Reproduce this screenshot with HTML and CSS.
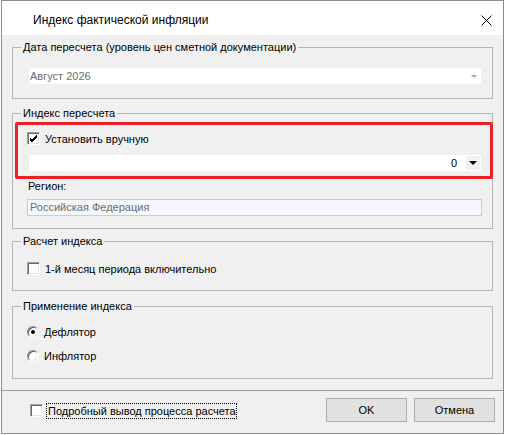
FILE: index.html
```html
<!DOCTYPE html>
<html lang="ru">
<head>
  <meta charset="UTF-8">
  <title>Индекс фактической инфляции</title>
  <link rel="stylesheet" href="styles.css">
</head>
<body>
  <div class="window">

    <!-- Title bar -->
    <div class="titlebar">
      <span class="title">Индекс фактической инфляции</span>
      <span class="close">
        <svg width="11" height="11" viewBox="0 0 11 11"><path d="M0.5 0.5 L10.5 10.5 M10.5 0.5 L0.5 10.5" stroke="#000" stroke-width="1" fill="none"/></svg>
      </span>
    </div>

    <div class="content">
      <fieldset class="group group-date">
        <legend>Дата пересчета (уровень цен сметной документации)</legend>
        <div class="group-body">
          <div class="combo disabled">
            <span class="combo-value">Август 2026</span>
            <span class="combo-btn"><i class="arrow"></i></span>
          </div>
        </div>
      </fieldset>

      <fieldset class="group group-index">
        <legend>Индекс пересчета</legend>
        <div class="group-body">
          <div class="manual">
            <label class="check-row">
              <span class="checkbox checked">
                <svg width="9" height="9" viewBox="0 0 9 9"><path d="M1 4 L3 6 L8 1 M1 5 L3 7 L8 2 M1 6 L3 8 L8 3" stroke="#000" stroke-width="1" fill="none"/></svg>
              </span>
              <span>Установить вручную</span>
            </label>
            <div class="combo value-combo">
              <span class="combo-value">0</span>
              <span class="combo-btn"><i class="arrow"></i></span>
            </div>
          </div>
          <div class="field-label">Регион:</div>
          <div class="textbox readonly">Российская Федерация</div>
        </div>
      </fieldset>

      <fieldset class="group group-calc">
        <legend>Расчет индекса</legend>
        <div class="group-body">
          <label class="check-row">
            <span class="checkbox"></span>
            <span>1-й месяц периода включительно</span>
          </label>
        </div>
      </fieldset>

      <fieldset class="group group-apply">
        <legend>Применение индекса</legend>
        <div class="group-body">
          <label class="radio-row">
            <span class="radio selected"></span>
            <span>Дефлятор</span>
          </label>
          <label class="radio-row">
            <span class="radio"></span>
            <span>Инфлятор</span>
          </label>
        </div>
      </fieldset>
    </div>

    <!-- Footer -->
    <div class="footer">
      <label class="check-row verbose">
        <span class="checkbox"></span>
        <span class="focused">Подробный вывод процесса расчета</span>
      </label>
      <div class="buttons">
        <button class="btn">OK</button>
        <button class="btn">Отмена</button>
      </div>
    </div>

  </div>
</body>
</html>
```

FILE: styles.css
```css
body {
  margin: 0;
  background: #fff;
  font-family: 'Liberation Sans', Arial, sans-serif;
  font-size: 11px;
  color: #000;
}

.window {
  box-sizing: border-box;
  width: 503px;
  height: 434px;
  margin-left: 1px;
  border: 1px solid #8c8c8c;
  background: #f0f0f0;
  display: flex;
  flex-direction: column;
}

.titlebar {
  height: 34px;
  background: #fff;
  display: flex;
  align-items: center;
  padding: 4px 11px 0 31px;
  box-sizing: border-box;
}

.title {
  font-size: 12px;
}

.close {
  margin-left: auto;
  display: flex;
}

.content {
  padding: 5px 10px 0 10px;
}

/* group boxes */
.group {
  margin: 0;
  padding: 0;
  border: 1px solid #b5b5b5;
  min-width: 0;
}

.group legend {
  margin-left: 8px;
  padding: 0 2px;
  line-height: 14px;
}

.group-body {
  padding: 0 10px 0 14px;
}

.group-date .group-body { padding-top: 14px; padding-bottom: 14px; }
.group-index { margin-top: 7px; }
.group-index .group-body { padding-top: 12px; padding-bottom: 12px; }
.group-calc { margin-top: 5px; }
.group-calc .group-body { padding-top: 14px; padding-bottom: 15px; }
.group-apply { margin-top: 8px; }
.group-apply .group-body { padding-top: 13px; padding-bottom: 16px; }

/* combo boxes */
.combo {
  height: 16px;
  margin: 0 1px 0 2px;
  background: #fff;
  display: flex;
  align-items: center;
}

.combo-value {
  flex: 1;
  padding-left: 1px;
}

.combo.disabled .combo-value {
  color: #6d6d6d;
}

.combo-btn {
  width: 14px;
  height: 16px;
  display: flex;
  align-items: center;
  justify-content: center;
}

.arrow {
  width: 0;
  height: 0;
  border-left: 3px solid transparent;
  border-right: 3px solid transparent;
  border-top: 3px solid #a8a8a8;
}

.value-combo .combo-value {
  text-align: right;
  padding-right: 9px;
}

.value-combo .combo-btn {
  background: #f0f0f0;
  margin-right: 1px;
  height: 14px;
}

.value-combo .arrow {
  border-left-width: 4px;
  border-right-width: 4px;
  border-top: 4px solid #000;
}

/* manual override block, highlighted with a red frame */
.manual {
  position: relative;
}

.manual::after {
  content: '';
  position: absolute;
  top: -10px;
  left: -12px;
  right: -11px;
  bottom: -8px;
  border: 3px solid #e8202a;
  border-radius: 2px;
  pointer-events: none;
}

.manual .combo {
  margin-top: 10px;
}

/* checkboxes and radios */
.check-row,
.radio-row {
  display: flex;
  align-items: center;
  gap: 5px;
  height: 13px;
}

.checkbox {
  box-sizing: border-box;
  width: 13px;
  height: 13px;
  background: #fff;
  border: 1px solid;
  border-color: #a0a0a0 #fff #fff #a0a0a0;
  box-shadow: inset 1px 1px #696969, inset -1px -1px #e3e3e3;
  display: flex;
  align-items: center;
  justify-content: center;
}

.radio-row {
  height: 12px;
}

.radio-row + .radio-row {
  margin-top: 12px;
}

.radio {
  box-sizing: border-box;
  width: 12px;
  height: 12px;
  border-radius: 50%;
  background: #fff;
  border: 1px solid;
  border-color: #8a8a8a #fff #fff #8a8a8a;
  box-shadow: inset 1px 1px #5e5e5e, inset -1px -1px #e3e3e3;
  display: flex;
  align-items: center;
  justify-content: center;
}

.radio.selected::after {
  content: '';
  width: 4px;
  height: 4px;
  border-radius: 50%;
  background: #000;
}

.field-label {
  margin-top: 8px;
  line-height: 14px;
  padding-left: 1px;
}

.textbox {
  box-sizing: border-box;
  height: 17px;
  margin-top: 6px;
  padding-left: 2px;
  line-height: 15px;
  border: 1px solid #c9cdd2;
}

.textbox.readonly {
  background: #f4f7fc;
  color: #6d6d6d;
}

/* footer */
.footer {
  flex: 1;
  margin-top: 11px;
  border-top: 1px solid #a0a0a0;
  display: flex;
  align-items: flex-start;
  padding: 7px 8px 0 28px;
}

.verbose {
  margin-top: 6px;
  gap: 4px;
}

.focused {
  outline: 1px dotted #000;
  padding: 1px 0 1px 1px;
}

.buttons {
  margin-left: auto;
  display: flex;
  gap: 7px;
}

.btn {
  width: 81px;
  height: 24px;
  background: #e1e1e1;
  border: 1px solid #adadad;
  font-family: 'Liberation Sans', Arial, sans-serif;
  font-size: 11px;
  color: #000;
  padding: 0;
}
```
